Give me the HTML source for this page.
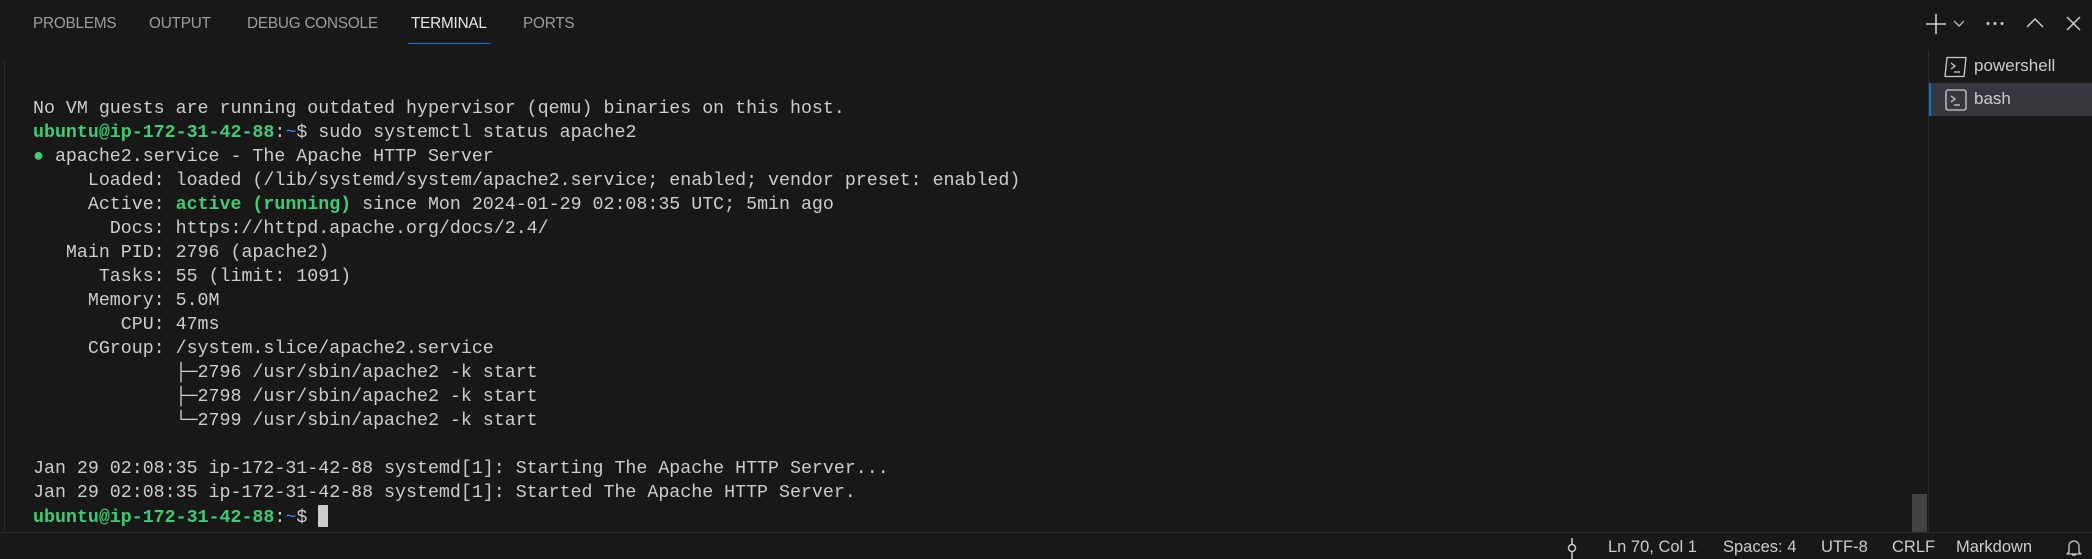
<!DOCTYPE html>
<html><head><meta charset="utf-8"><style>
html,body{margin:0;padding:0;}
body{width:2092px;height:559px;background:#181818;position:relative;overflow:hidden;font-family:"Liberation Sans",sans-serif;color:#cccccc;}
.tab{position:absolute;top:15px;font-size:15.3px;color:#9d9d9d;letter-spacing:-0.2px;}
.tab.act{color:#e7e7e7;}
pre{position:absolute;left:33px;top:97px;margin:0;font-family:"Liberation Mono",monospace;font-size:18.3px;line-height:24px;color:#cccccc;}
.g{color:#3dcb73;}
.gb{color:#3dcb73;font-weight:bold;}
.b{color:#3b8eea;}
.cur{display:inline-block;width:10px;height:22px;background:#cccccc;vertical-align:-5px;}
.st{position:absolute;top:538px;font-size:16.5px;color:#cccccc;}
.ic{position:absolute;}
</style></head><body>
<div style="position:absolute;left:4px;top:60px;width:1px;height:472px;background:#2b2b2b"></div>
<div class="tab" style="left:33px">PROBLEMS</div>
<div class="tab" style="left:149px">OUTPUT</div>
<div class="tab" style="left:247px">DEBUG CONSOLE</div>
<div class="tab act" style="left:411px">TERMINAL</div>
<div class="tab" style="left:523px">PORTS</div>
<div style="position:absolute;left:408px;top:43px;width:83px;height:1px;background:#0078d4"></div>

<svg class="ic" style="left:1924px;top:13px" width="24" height="22"><path d="M12 1v20M2 11h20" stroke="#cccccc" stroke-width="1.6" fill="none"/></svg>
<svg class="ic" style="left:1953px;top:20px" width="12" height="8"><path d="M1 1l5 5l5-5" stroke="#cccccc" stroke-width="1.2" fill="none"/></svg>
<svg class="ic" style="left:1985px;top:21px" width="22" height="5"><circle cx="3" cy="2.5" r="1.5" fill="#cccccc"/><circle cx="10" cy="2.5" r="1.5" fill="#cccccc"/><circle cx="17" cy="2.5" r="1.5" fill="#cccccc"/></svg>
<svg class="ic" style="left:2026px;top:17px" width="18" height="12"><path d="M1 10l8-8l8 8" stroke="#cccccc" stroke-width="1.5" fill="none"/></svg>
<svg class="ic" style="left:2066px;top:16px" width="15" height="15"><path d="M1 1l13 13M14 1L1 14" stroke="#cccccc" stroke-width="1.5" fill="none"/></svg>

<div style="position:absolute;left:1928px;top:50px;width:1px;height:482px;background:#2b2b2b"></div>
<div style="position:absolute;left:1929px;top:83px;width:163px;height:33px;background:#37373d"></div>
<div style="position:absolute;left:1929px;top:83px;width:2px;height:33px;background:#0078d4"></div>
<svg class="ic" style="left:1944px;top:56px" width="24" height="22"><path d="M3 1.5h19l-2 19H1z" stroke="#cccccc" stroke-width="1.3" fill="none" stroke-linejoin="round"/><path d="M7 7l4 3l-4 3M10 16h6" stroke="#cccccc" stroke-width="1.3" fill="none"/></svg>
<div style="position:absolute;left:1974px;top:56px;font-size:17px;color:#cccccc">powershell</div>
<svg class="ic" style="left:1945px;top:89px" width="22" height="22"><rect x="1" y="1" width="20" height="20" rx="2" stroke="#cccccc" stroke-width="1.3" fill="none"/><path d="M6 7l4 3l-4 3M9 16h6" stroke="#cccccc" stroke-width="1.3" fill="none"/></svg>
<div style="position:absolute;left:1974px;top:89px;font-size:17px;color:#cccccc">bash</div>

<div style="position:absolute;left:1912px;top:494px;width:15px;height:38px;background:#424242"></div>

<pre>No VM guests are running outdated hypervisor (qemu) binaries on this host.
<span class="gb">ubuntu@ip-172-31-42-88</span>:<span class="b">~</span>$ sudo systemctl status apache2
<span class="g">●</span> apache2.service - The Apache HTTP Server
     Loaded: loaded (/lib/systemd/system/apache2.service; enabled; vendor preset: enabled)
     Active: <span class="gb">active (running)</span> since Mon 2024-01-29 02:08:35 UTC; 5min ago
       Docs: https://httpd.apache.org/docs/2.4/
   Main PID: 2796 (apache2)
      Tasks: 55 (limit: 1091)
     Memory: 5.0M
        CPU: 47ms
     CGroup: /system.slice/apache2.service
             ├─2796 /usr/sbin/apache2 -k start
             ├─2798 /usr/sbin/apache2 -k start
             └─2799 /usr/sbin/apache2 -k start

Jan 29 02:08:35 ip-172-31-42-88 systemd[1]: Starting The Apache HTTP Server...
Jan 29 02:08:35 ip-172-31-42-88 systemd[1]: Started The Apache HTTP Server.
<span class="gb">ubuntu@ip-172-31-42-88</span>:<span class="b">~</span>$ <span class="cur"></span></pre>

<div style="position:absolute;left:0;top:532px;width:2092px;height:1px;background:#2b2b2b"></div>
<svg class="ic" style="left:1566px;top:538px" width="12" height="21"><circle cx="6" cy="10" r="3.5" stroke="#cccccc" stroke-width="1.5" fill="none"/><path d="M6 0v6.5M6 13.5V21" stroke="#cccccc" stroke-width="1.5"/></svg>
<div class="st" style="left:1608px">Ln 70, Col 1</div>
<div class="st" style="left:1723px">Spaces: 4</div>
<div class="st" style="left:1821px">UTF-8</div>
<div class="st" style="left:1892px">CRLF</div>
<div class="st" style="left:1956px">Markdown</div>
<svg class="ic" style="left:2066px;top:538px" width="16" height="20"><path d="M3 14V8a5 5 0 0 1 10 0v6l2 2H1z" stroke="#cccccc" stroke-width="1.3" fill="none" stroke-linejoin="round"/><path d="M6 17h4" stroke="#cccccc" stroke-width="1.3"/></svg>
</body></html>
